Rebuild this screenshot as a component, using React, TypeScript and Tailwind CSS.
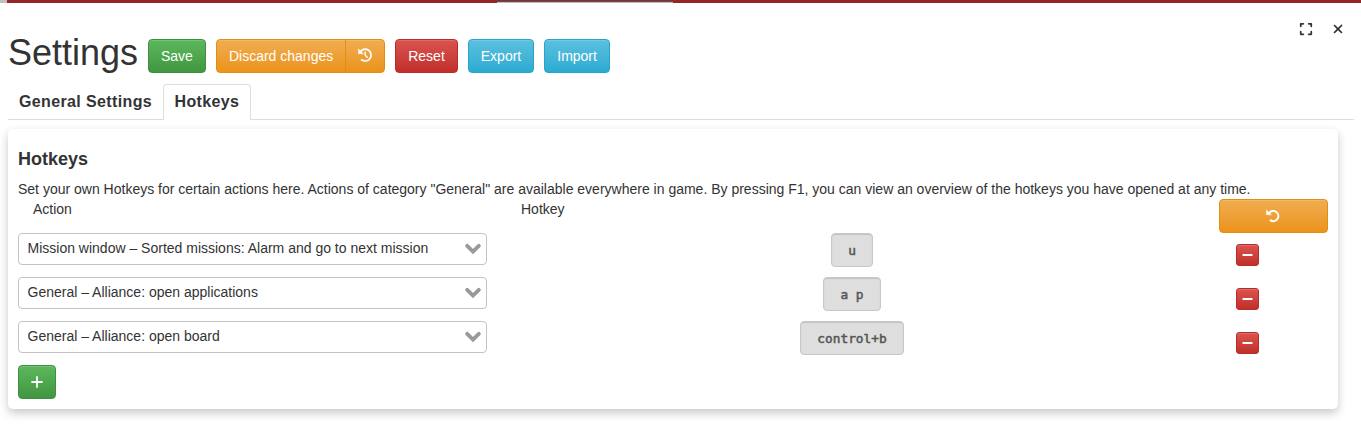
import type { ReactNode } from "react";
import { FaExpand, FaXmark } from "react-icons/fa6";

const base =
  "flex items-center justify-center border text-white text-[14px] leading-5 shadow-[inset_0_1px_0_rgba(255,255,255,.15)] bg-linear-to-b ";
const tones = {
  green: "from-[#5cb85c] to-[#419641] border-[#3e8f3e]",
  orange: "from-[#f0ad4e] to-[#eb9316] border-[#e38d13]",
  red: "from-[#d9534f] to-[#c12e2a] border-[#b92c28]",
  blue: "from-[#5bc0de] to-[#2aabd2] border-[#28a4c9]",
};

function Button({
  tone,
  className = "h-[34px] px-3 rounded",
  children,
}: {
  tone: keyof typeof tones;
  className?: string;
  children: ReactNode;
}) {
  return <button className={`${base} ${tones[tone]} ${className}`}>{children}</button>;
}

function UndoIcon({ clock = false }: { clock?: boolean }) {
  return (
    <svg width="14" height="14" viewBox="0 0 14 14" fill="none" stroke="currentColor" strokeWidth={clock ? 1.7 : 2}>
      {clock ? (
        <path d="M2 4.2A5.9 5.9 0 1 1 3.6 11.8" strokeLinecap="round" />
      ) : (
        <path d="M3 4.2A5.1 5.1 0 1 1 4.6 11.4" strokeLinecap="round" />
      )}
      <path d="M.4.9V5.8H5.4Z" fill="currentColor" stroke="currentColor" strokeWidth=".4" strokeLinejoin="round" />
      {clock && <path d="M7.2 3.9V7.3L9.2 9.2" strokeWidth="1.4" strokeLinecap="round" />}
    </svg>
  );
}

const hotkeys = [
  { action: "Mission window – Sorted missions: Alarm and go to next mission", keys: "u" },
  { action: "General – Alliance: open applications", keys: "a p" },
  { action: "General – Alliance: open board", keys: "control+b" },
];

export default function App() {
  return (
    <div className="relative h-[428px] w-[1361px] overflow-hidden bg-white font-['Liberation_Sans',Arial,sans-serif] text-[14px] leading-5 text-[#333]">
      <div className="flex h-[3px] bg-[#972727]">
        <div className="h-[3px] w-[7px] bg-[#c4c0c0]" />
        <div className="ml-[490px] mt-px h-[2px] w-[176px] border-t border-[#555] bg-[#bbb]" />
      </div>

      <div className="absolute right-[16px] top-[22px] flex items-center gap-[18px] text-[#333]">
        <FaExpand className="h-[14px] w-[14px]" />
        <FaXmark className="h-[14px] w-[14px]" />
      </div>

      <header className="flex h-[81px] items-start pl-2 pt-[30px]">
        <h1 className="w-[140px] whitespace-nowrap text-[36px] leading-[40px]">Settings</h1>
        <div className="mt-[6px] flex gap-[10px]">
          <Button tone="green">Save</Button>
          <div className="flex">
            <Button tone="orange" className="h-[34px] rounded-l px-3">Discard changes</Button>
            <Button tone="orange" className="-ml-px h-[34px] w-[40px] rounded-r pb-[3px]">
              <UndoIcon clock />
            </Button>
          </div>
          <Button tone="red">Reset</Button>
          <Button tone="blue">Export</Button>
          <Button tone="blue">Import</Button>
        </div>
      </header>

      <nav className="ml-2 flex h-[36px] w-[1346px] border-b border-[#ddd] text-[16px] font-bold leading-5">
        <div className="w-[155px] whitespace-nowrap pl-[11px] pt-[8px] tracking-[0.37px]">General Settings</div>
        <div className="h-[36px] w-[88px] rounded-t border border-b-0 border-[#ddd] bg-white pl-[10.5px] pt-[7px] tracking-[0.37px]">
          Hotkeys
        </div>
      </nav>

      <main className="ml-2 mt-[9px] h-[280px] w-[1330px] rounded-[5px] bg-white px-[10px] pt-[19px] shadow-[0_4px_10px_rgba(0,0,0,.22)]">
        <h2 className="text-[18px] font-bold leading-[22px]">Hotkeys</h2>
        <p className="mt-[9px] whitespace-nowrap">
          Set your own Hotkeys for certain actions here. Actions of category "General" are available everywhere in
          game. By pressing F1, you can view an overview of the hotkeys you have opened at any time.
        </p>
        <div className="flex h-[34px]">
          <span className="w-[488px] pl-[15px]">Action</span>
          <span className="w-[713px] pl-[15px]">Hotkey</span>
          <Button tone="orange" className="h-[34px] w-[109px] rounded pr-[2px]">
            <UndoIcon />
          </Button>
        </div>
        {hotkeys.map(({ action, keys }) => (
          <div key={keys} className="flex h-[44px]">
            <div className="flex h-[32px] w-[469px] items-center justify-between rounded border border-[#c4c4c4] pl-[8.5px] pr-[5px]">
              <span className="-mt-[2px] whitespace-nowrap">{action}</span>
              <svg width="16" height="12" viewBox="0 0 16 12" fill="none" stroke="#999" strokeWidth="3.8">
                <path d="M2.2 2.8 8 8.6 13.8 2.8" strokeLinecap="round" />
              </svg>
            </div>
            <div className="flex w-[730px] justify-center">
              <kbd className="flex h-[34px] items-center whitespace-pre rounded border border-[#c8c8c8] bg-[#dedede] px-[16px] pt-px font-['DejaVu_Sans_Mono',monospace] text-[12.8px] text-[#555] shadow-[inset_0_1px_1px_rgba(0,0,0,.12)] [-webkit-text-stroke:0.5px_#555]">
                {keys}
              </kbd>
            </div>
            <Button tone="red" className="ml-[19px] mt-[11px] h-[22px] w-[23px] rounded-[3px]">
              <svg width="11" height="12" viewBox="0 0 11 12" fill="currentColor">
                <rect x=".5" y="5" width="10" height="2" rx=".6" />
              </svg>
            </Button>
          </div>
        ))}
        <Button tone="green" className="h-[34px] w-[38px] rounded">
          <svg width="12" height="12" viewBox="0 0 12 12" stroke="currentColor" strokeWidth="1.8" strokeLinecap="round">
            <path d="M6 1V11M1 6H11" />
          </svg>
        </Button>
      </main>
    </div>
  );
}
